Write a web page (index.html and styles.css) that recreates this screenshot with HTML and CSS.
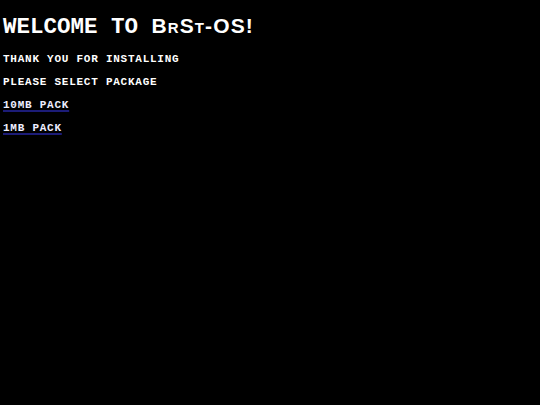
FILE: index.html
```html
<!DOCTYPE html>
<html>
<head>
<meta charset="utf-8">
<link rel="stylesheet" href="styles.css">
</head>
<body>
<div class="screen">
  <h1 class="title">WELCOME TO <span class="brand">BrSt-OS!</span></h1>
  <p class="line">THANK YOU FOR INSTALLING</p>
  <p class="line">PLEASE SELECT PACKAGE</p>
  <a class="line link" href="#">10MB PACK</a>
  <a class="line link" href="#">1MB PACK</a>
</div>
</body>
</html>
```
FILE: styles.css
```css
html, body {
  margin: 0;
  padding: 0;
  background: #000;
  height: 100%;
}
.screen {
  display: flex;
  flex-direction: column;
  align-items: flex-start;
  padding: 14px 3px;
  font-family: "Liberation Mono", monospace;
  color: #fff;
}
.title {
  margin: 0 0 9px 0;
  font-size: 22.5px;
  font-weight: bold;
  letter-spacing: 0;
  line-height: 24px;
}
.brand {
  font-family: "Liberation Sans", sans-serif;
  font-variant: small-caps;
  font-size: 21px;
  letter-spacing: 1.1px;
}
.line {
  margin: 0;
  font-size: 11px;
  font-weight: bold;
  letter-spacing: 0.75px;
  line-height: 23px;
  color: #fff;
}
.link {
  color: #eeeeff;
  text-decoration: underline;
  text-decoration-color: #1c1c78;
  text-decoration-thickness: 1.5px;
  text-underline-offset: 2px;
}
```
